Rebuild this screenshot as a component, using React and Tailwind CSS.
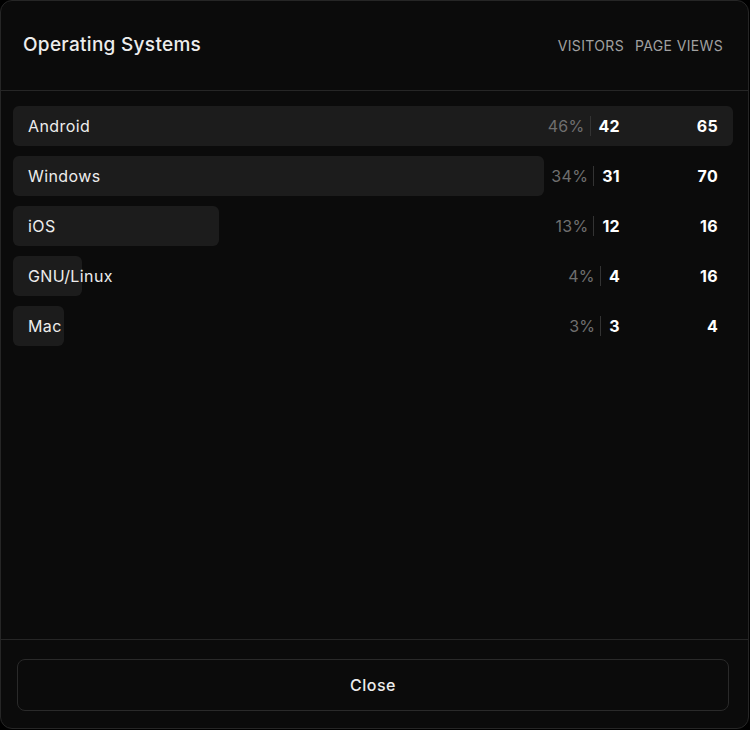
import React from "react";

const rows = [
  { name: "Android", pct: "46%", visitors: 42, views: 65 },
  { name: "Windows", pct: "34%", visitors: 31, views: 70 },
  { name: "iOS", pct: "13%", visitors: 12, views: 16 },
  { name: "GNU/Linux", pct: "4%", visitors: 4, views: 16 },
  { name: "Mac", pct: "3%", visitors: 3, views: 4 },
];

export default function App() {
  const max = Math.max(...rows.map((r) => r.visitors));
  return (
    <div
      className="w-[750px] h-[730px] bg-black"
      style={{ fontFamily: "Inter, 'Noto Sans', sans-serif" }}
    >
      <div className="w-[749px] h-[729px] bg-[#0b0b0b] border border-[#262626] rounded-xl flex flex-col overflow-hidden">
        <div className="h-[90px] shrink-0 flex items-center justify-between pl-[22px] pr-[25px] border-b border-[#262626]">
          <h2 className="text-[19px] tracking-[0.3px] font-medium text-[#ededed]">Operating Systems</h2>
          <div className="flex items-center gap-[11px] text-[14px] tracking-[0.35px] text-[#a1a1a1]">
            <span>VISITORS</span>
            <span>PAGE VIEWS</span>
          </div>
        </div>
        <div className="flex-1 flex flex-col gap-[10px] pt-[15px] pl-[12px] pr-[15px]">
          {rows.map((r) => (
            <div key={r.name} className="relative h-10 flex items-center justify-between pl-[15px] pr-[15px]">
              <div
                className="absolute left-0 top-0 h-full rounded-md bg-[#1c1c1c]"
                style={{ width: `${(r.visitors / max) * 100}%` }}
              />
              <span className="relative text-[16px] tracking-[0.4px] text-[#ededed]">{r.name}</span>
              <div className="relative flex items-center text-[16px] tracking-[0.3px]">
                <span className="text-[#6f6f6f]">{r.pct}</span>
                <span className="ml-[5px] w-px h-5 bg-[#333333]" />
                <span className="ml-2 font-bold text-white">{r.visitors}</span>
                <span className="w-[98px] text-right font-bold text-white">{r.views}</span>
              </div>
            </div>
          ))}
        </div>
        <div className="shrink-0 border-t border-[#262626] pl-[16px] pr-[19px] pt-[19px] pb-[17px]">
          <button className="w-full h-[52px] rounded-lg border border-[#2a2a2a] text-[16px] tracking-[0.5px] font-medium text-[#ededed]">
            Close
          </button>
        </div>
      </div>
    </div>
  );
}
